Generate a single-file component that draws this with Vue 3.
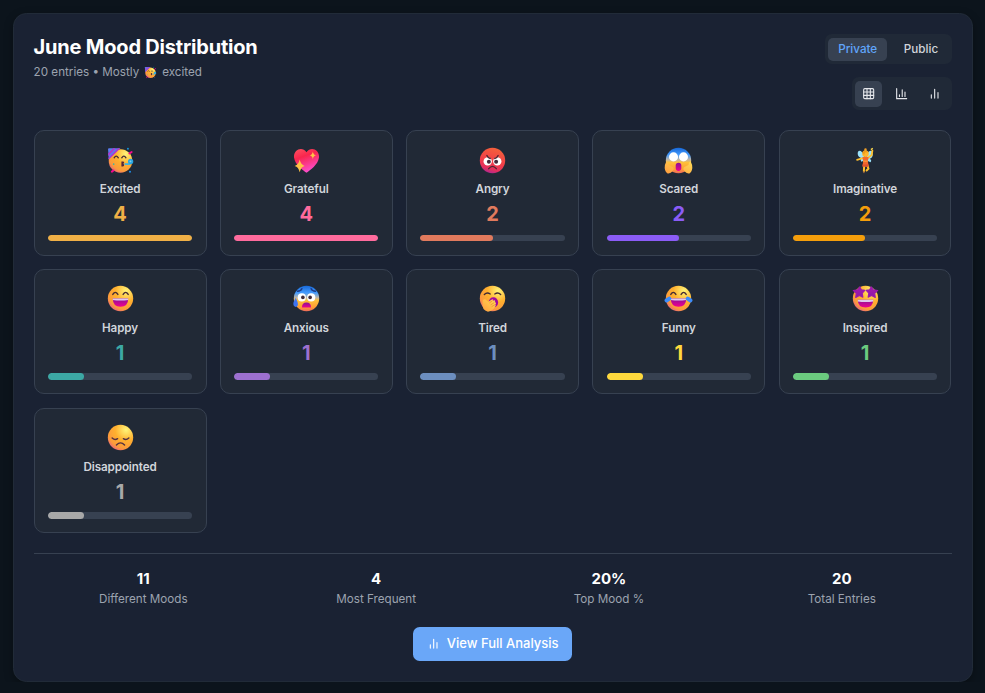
<script setup>
import { ref } from 'vue'

const moods = [
  { name: 'Excited', count: 4, color: '#f0b046', icon: 'party' },
  { name: 'Grateful', count: 4, color: '#ff6b9d', icon: 'heart' },
  { name: 'Angry', count: 2, color: '#e17a5d', icon: 'angry' },
  { name: 'Scared', count: 2, color: '#8b5cf6', icon: 'scream' },
  { name: 'Imaginative', count: 2, color: '#f59e0b', icon: 'fairy' },
  { name: 'Happy', count: 1, color: '#3ca8a4', icon: 'grin' },
  { name: 'Anxious', count: 1, color: '#9d70d0', icon: 'anxious' },
  { name: 'Tired', count: 1, color: '#6c8ebf', icon: 'yawn' },
  { name: 'Funny', count: 1, color: '#ffd93d', icon: 'joy' },
  { name: 'Inspired', count: 1, color: '#6bcb7f', icon: 'star' },
  { name: 'Disappointed', count: 1, color: '#a8a8a8', icon: 'sad' },
]
const top = Math.max(...moods.map((m) => m.count))
const stats = [
  { value: '11', label: 'Different Moods' },
  { value: '4', label: 'Most Frequent' },
  { value: '20%', label: 'Top Mood %' },
  { value: '20', label: 'Total Entries' },
]
const scope = ref('Private')
const view = ref('grid')
</script>

<template>
  <svg class="defs" width="0" height="0" aria-hidden="true">
    <defs>
      <radialGradient id="face" cx="0.72" cy="0.2" r="0.95">
        <stop offset="0" stop-color="#fff478" />
        <stop offset="0.45" stop-color="#ffb02e" />
        <stop offset="0.78" stop-color="#fb9a3c" />
        <stop offset="1" stop-color="#e45090" />
      </radialGradient>
      <linearGradient id="blueFace" x1="0" y1="0" x2="0" y2="1">
        <stop offset="0" stop-color="#1768d8" />
        <stop offset="0.28" stop-color="#459cff" />
        <stop offset="0.48" stop-color="#c7b7a0" />
        <stop offset="0.58" stop-color="#ffc13a" />
        <stop offset="0.85" stop-color="#ff9b35" />
        <stop offset="1" stop-color="#ee6a5c" />
      </linearGradient>
      <linearGradient id="redFace" x1="0.7" y1="0" x2="0.4" y2="1">
        <stop offset="0" stop-color="#f4623a" />
        <stop offset="0.6" stop-color="#f03c4a" />
        <stop offset="0.85" stop-color="#e22e60" />
        <stop offset="1" stop-color="#b0288e" />
      </linearGradient>
      <linearGradient id="heartFill" x1="0" y1="0" x2="0.4" y2="1">
        <stop offset="0" stop-color="#ff5260" />
        <stop offset="0.4" stop-color="#f8264e" />
        <stop offset="1" stop-color="#fc4cc8" />
      </linearGradient>
      <linearGradient id="mouth" x1="0" y1="0" x2="0" y2="1">
        <stop offset="0" stop-color="#8a1295" />
        <stop offset="1" stop-color="#f00090" />
      </linearGradient>
      <linearGradient id="hand" x1="1" y1="0" x2="0" y2="1">
        <stop offset="0" stop-color="#ffdc57" />
        <stop offset="1" stop-color="#ff9c3d" />
      </linearGradient>
      <linearGradient id="starFill" x1="0" y1="0" x2="0" y2="1">
        <stop offset="0" stop-color="#a819ad" />
        <stop offset="1" stop-color="#8c17a8" />
      </linearGradient>
    </defs>

    <symbol id="party" viewBox="0 0 32 32">
      <circle cx="16" cy="16.5" r="13" fill="url(#face)" />
      <path d="M2.300 3.500Q2.300 2.500 3.300 2.500H15.500L3 14.500Z" fill="#5a7cf0" />
      <path d="M2.300 8.300L8 2.500H10.700L2.400 11ZM3 15l-.5-1.800L13.300 2.500h2.700Z" fill="#b138cc" />
      <path d="M9 13q2.300-3.600 4.600 0M17.400 13q2.300-3.600 4.600 0" fill="none" stroke="#452c35" stroke-width="1.500" stroke-linecap="round" />
      <path d="M17 17h2.200q1.800.8 0 2.600 1.800 2-.4 3H17z" fill="#57283a" />
      <path d="M20.500 20h6.500" stroke="#3fb2e0" stroke-width="2" />
      <circle cx="27.200" cy="17" r="2.900" fill="#2ca6df" />
      <circle cx="27" cy="17" r="1" fill="#7fd2f0" />
      <path d="M25.800 8.300L28.300 6.600M6.500 28.300l1.700-1.300" stroke="#f6088e" stroke-width="2.200" stroke-linecap="round" />
      <circle cx="24.200" cy="3" r="1" fill="#149de4" />
      <circle cx="8.500" cy="20" r=".9" fill="#36b5ad" />
      <circle cx="26.500" cy="28.500" r="1.100" fill="#1e8de8" />
    </symbol>

    <symbol id="heart" viewBox="0 0 32 32">
      <path d="M16 7C21-.7 31 4.500 29.700 13 28.700 20.500 20 27 16 29.500 12 27 3.300 20.500 2.300 13 1 4.500 11-.7 16 7Z" fill="url(#heartFill)" />
      <path d="M23 6q.7 4 3.500 4.300-2.800.5-3.500 4.200-.7-3.700-3.500-4.200Q22.300 10 23 6ZM8.500 15q1.200 6 5.500 7-4.300 1-5.500 7-1.200-6-5.500-7 4.300-1 5.500-7Z" fill="#ffc247" />
    </symbol>

    <symbol id="angry" viewBox="0 0 32 32">
      <circle cx="16" cy="16" r="14" fill="url(#redFace)" />
      <circle cx="10.700" cy="17" r="4.600" fill="#fff" />
      <circle cx="21.300" cy="17" r="4.600" fill="#fff" />
      <circle cx="12" cy="17.300" r="2.200" fill="#432a3b" />
      <circle cx="20" cy="17.300" r="2.200" fill="#432a3b" />
      <path d="M9.800 10.500q1.200 2.800 3.700 3.300M22.200 10.500q-1.200 2.800-3.700 3.300M11.800 25q4.200-5 8.400 0" fill="none" stroke="#4b2634" stroke-width="1.500" stroke-linecap="round" />
    </symbol>

    <symbol id="scream" viewBox="0 0 32 32">
      <circle cx="16" cy="16" r="14" fill="url(#blueFace)" />
      <circle cx="10.500" cy="12" r="5" fill="#fff" />
      <circle cx="21.500" cy="12" r="5" fill="#fff" />
      <rect x="12.900" y="18.500" width="6.200" height="9" rx="3.100" fill="url(#mouth)" />
      <path d="M2.500 17q2 0 2.500 4 2 1 5 2.500 1.800 2-.4 4Q7 31 3.500 30 0 27 1 21ZM29.500 17q-2 0-2.500 4-2 1-5 2.500-1.800 2 .4 4 2.600 3.500 6.100 2.500 3.500-3 2.500-9Z" fill="url(#hand)" />
    </symbol>

    <symbol id="fairy" viewBox="0 0 32 32">
      <path d="M15 12C12 3 6.500 4 7.500 9.500q.8 3.500 5 4-3 1.500-1 4l4-2ZM17 12C18 4 24 3 24 9q0 4-3.500 5 3 1.500 1 4l-4-2Z" fill="#9be1fb" />
      <path d="M13 13.500l-6.300 1.800M19 13l3.800-3 .8-5" fill="none" stroke="#ffc02d" stroke-width="2" stroke-linecap="round" />
      <path d="M12.600 12h6.800l-.8 5 1 5.500h-7l.8-5.500Z" fill="#f2672c" />
      <path d="M13.300 16.700h5.200" stroke="#f9a13a" stroke-width="1.300" />
      <path d="M14.500 22l-.3 6M18.300 22l.9 3-2 2" fill="none" stroke="#ffc02d" stroke-width="2.200" stroke-linecap="round" />
      <path d="M12.500 20.500h7.200l-.8 2.500h-6z" fill="#dd5230" />
      <circle cx="16" cy="8.500" r="3.600" fill="#ffb52d" />
      <path d="M12.800 8q.5-4 4.500-3l2.200 2-4 .3-1 2.700Z" fill="#ee9d1c" />
      <circle cx="16" cy="4" r="1.400" fill="#f0a028" />
      <path d="M22 4l2-1.500" stroke="#ffda50" stroke-width="1.500" />
      <path d="M14.200 28l-.2 2" stroke="#8b5b40" stroke-width="1.500" />
    </symbol>

    <symbol id="laugh" viewBox="0 0 32 32">
      <circle cx="16" cy="16" r="14" fill="url(#face)" />
      <path d="M7.500 11.500q2.800-4.500 5.600 0M18.900 11.500q2.800-4.500 5.600 0" fill="none" stroke="#452c35" stroke-width="1.600" stroke-linecap="round" />
      <path d="M7.500 16h17q0 9-8.500 9T7.500 16Z" fill="url(#mouth)" />
      <path d="M7.500 16h17v1.700q-8.500 1.200-17 0Z" fill="#dfc7ed" />
    </symbol>
    <symbol id="grin" viewBox="0 0 32 32"><use href="#laugh" /></symbol>
    <symbol id="joy" viewBox="0 0 32 32">
      <use href="#laugh" />
      <path d="M5.800 16.200l-3 2M26.200 16.200l3 2" stroke="#3c8cfb" stroke-width="4.400" stroke-linecap="round" />
    </symbol>

    <symbol id="anxious" viewBox="0 0 32 32">
      <circle cx="16" cy="16" r="14" fill="url(#blueFace)" />
      <path d="M6 8q4 0 5-3M26 8q-4 0-5-3" fill="none" stroke="#1d3984" stroke-width="1.400" stroke-linecap="round" />
      <circle cx="10.800" cy="14.800" r="4.500" fill="#fff" />
      <circle cx="21.200" cy="14.800" r="4.500" fill="#fff" />
      <circle cx="12" cy="14.800" r="2" fill="#402a38" />
      <circle cx="20" cy="14.800" r="2" fill="#402a38" />
      <path d="M11 26q0-5.500 5-5.500t5 5.500Z" fill="url(#mouth)" />
      <path d="M4 15.500q3.500 5.500 2.200 8.500Q4 26.500 2 24 .3 21.500 4 15.500Z" fill="#3d73f2" />
    </symbol>

    <symbol id="yawn" viewBox="0 0 32 32">
      <circle cx="16" cy="16" r="14" fill="url(#face)" />
      <path d="M7 11.500q3-3 6.500-.5M18.500 11q3.500-2.500 6.500.5" fill="none" stroke="#452c35" stroke-width="1.500" stroke-linecap="round" />
      <ellipse cx="17" cy="20.300" rx="5.200" ry="5.600" fill="#a00a9f" />
      <path d="M5.300 18q2-2.300 4 0l2 1.500 4.500-2.800q1.800.2.500 1.800l2-.7q1.500.6.200 2l1 .6q1 1.100-.4 2l.6 1Q17 30 11 30.500 4 29 5 21Z" fill="url(#hand)" />
      <path d="M12.500 21l3.500-2.500M14 23l4-2.500M15 25l4-2.300" stroke="#e98e2e" stroke-width=".8" />
    </symbol>

    <symbol id="star" viewBox="0 0 32 32">
      <circle cx="16" cy="16" r="14" fill="url(#face)" />
      <path d="M7.500 17.500h17q0 8.500-8.500 8.500t-8.500-8.500Z" fill="url(#mouth)" />
      <path d="M7.500 17.500h17v1.700q-8.500 1.200-17 0Z" fill="#dfc7ed" />
      <path d="M9.700 3l1.700 3.400 3.800.6-2.800 3.100.7 4.400-3.800-1.800-4.100 2.100.6-4.600-3.300-3.100 4.900-.8ZM22.300 3l-1.700 3.400-3.800.6 2.800 3.100-.7 4.400 3.800-1.800 4.100 2.100-.6-4.600 3.300-3.100-4.900-.8Z" fill="url(#starFill)" stroke="#9a18ad" stroke-width="1.200" stroke-linejoin="round" />
    </symbol>

    <symbol id="sad" viewBox="0 0 32 32">
      <circle cx="16" cy="16" r="14" fill="url(#face)" />
      <path d="M6.800 16.600q3 2.800 6 .7M25.200 16.600q-3 2.800-6 .7M11.500 24.300q4.500-4.700 9 0" fill="none" stroke="#543141" stroke-width="1.600" stroke-linecap="round" />
    </symbol>

    <symbol id="i-grid" viewBox="0 0 24 24"><rect x="3" y="3" width="18" height="18" rx="2" /><path d="M3 9h18M3 15h18M9 3v18M15 3v18" /></symbol>
    <symbol id="i-chart" viewBox="0 0 24 24"><path d="M3 3v18h18M18 17V9M13 17V5M8 17v-3" /></symbol>
    <symbol id="i-bars" viewBox="0 0 24 24"><path d="M18 20V10M12 20V4M6 20v-6" /></symbol>
  </svg>

  <main class="panel">
    <header class="head">
      <div>
        <h1>June Mood Distribution</h1>
        <p class="sub">20 entries • Mostly <svg class="mini"><use href="#party" /></svg> excited</p>
      </div>
      <div class="controls">
        <div class="toggle">
          <button v-for="s in ['Private', 'Public']" :key="s" :class="{ active: scope === s }" @click="scope = s">{{ s }}</button>
        </div>
        <div class="toggle views">
          <button v-for="v in ['grid', 'chart', 'bars']" :key="v" :class="{ active: view === v }" @click="view = v">
            <svg class="icon"><use :href="'#i-' + v" /></svg>
          </button>
        </div>
      </div>
    </header>

    <section class="grid">
      <article v-for="m in moods" :key="m.name" class="mood">
        <div class="emoji"><svg><use :href="'#' + m.icon" /></svg></div>
        <div class="name">{{ m.name }}</div>
        <div class="count" :style="{ color: m.color }">{{ m.count }}</div>
        <div class="track"><div class="fill" :style="{ width: (m.count / top) * 100 + '%', background: m.color }"></div></div>
      </article>
    </section>

    <section class="stats">
      <div v-for="s in stats" :key="s.label">
        <div class="value">{{ s.value }}</div>
        <div class="label">{{ s.label }}</div>
      </div>
    </section>

    <div class="action">
      <button class="primary"><svg class="icon"><use href="#i-bars" /></svg>View Full Analysis</button>
    </div>
  </main>
</template>

<style>
html,
body {
  background: #0c141c;
}
body {
  margin: 0;
  overflow: hidden;
}
</style>

<style scoped>
.defs {
  position: absolute;
}
.panel {
  box-sizing: border-box;
  height: 669px;
  margin: 13.3px 12.5px 0 12.6px;
  padding: 20px;
  border: 1px solid #212b38;
  border-radius: 13.3px;
  background: #1a2233;
  box-shadow: 0 3px 10px rgba(0, 0, 0, 0.3);
  color: #fff;
  font-family: Inter, sans-serif;
}
.head {
  display: flex;
  justify-content: space-between;
  height: 96px;
}
h1 {
  margin: 0;
  font-size: 20px;
  line-height: 26.67px;
  font-weight: 700;
  letter-spacing: -0.2px;
}
.sub {
  display: flex;
  align-items: center;
  gap: 5px;
  margin: 3.3px 0 0;
  font-size: 11.67px;
  line-height: 16.67px;
  color: #9ca3af;
}
.mini {
  width: 13px;
  height: 13px;
}
.controls {
  display: flex;
  flex-direction: column;
  align-items: flex-end;
  gap: 13px;
}
.toggle {
  display: flex;
  gap: 6.67px;
  padding: 3.33px;
  border-radius: 6.67px;
  background: #202937;
}
button {
  border: 0;
  background: none;
  font-family: inherit;
}
.toggle button {
  display: flex;
  align-items: center;
  padding: 0 10px;
  height: 23.4px;
  border-radius: 5px;
  color: #d1d5db;
  font-size: 11.67px;
  font-weight: 500;
}
.toggle .active {
  background: #374151;
  color: #60a5fa;
}
.views button,
.views .active {
  height: 26.3px;
  padding: 0 6.67px;
  color: #e5e7eb;
}
.icon {
  width: 13.33px;
  height: 13.33px;
  fill: none;
  stroke: currentColor;
  stroke-width: 2;
  stroke-linecap: round;
  stroke-linejoin: round;
}
.grid {
  display: grid;
  grid-template-columns: repeat(5, 1fr);
  gap: 13.33px;
}
.mood {
  padding: 13.33px;
  border: 1px solid #374151;
  border-radius: 10px;
  background: #212936;
  text-align: center;
}
.emoji {
  display: flex;
  justify-content: center;
  align-items: center;
  box-sizing: border-box;
  height: 30px;
  padding-top: 1px;
  margin-bottom: 6.67px;
}
.emoji svg {
  flex: none;
  width: 29px;
  height: 29px;
}
.name {
  margin-bottom: 3.33px;
  color: #d1d5db;
  font-size: 11.67px;
  line-height: 16.67px;
  font-weight: 600;
  letter-spacing: -0.12px;
}
.count {
  margin-bottom: 6.67px;
  font-size: 20px;
  line-height: 26.67px;
  font-weight: 700;
}
.track {
  height: 6.67px;
  overflow: hidden;
  border-radius: 4px;
  background: #374151;
}
.fill {
  height: 100%;
  border-radius: 4px;
}
.stats {
  display: grid;
  grid-template-columns: repeat(4, 1fr);
  gap: 13.33px;
  margin-top: 20px;
  padding-top: 13.33px;
  border-top: 1px solid #374151;
  text-align: center;
}
.value {
  font-size: 15px;
  line-height: 23.33px;
  font-weight: 700;
}
.label {
  color: #9ca3af;
  font-size: 11.67px;
  line-height: 16.67px;
}
.action {
  display: flex;
  justify-content: center;
  margin-top: 20px;
}
.primary {
  display: flex;
  align-items: center;
  gap: 7px;
  height: 33.5px;
  padding: 0 13.33px 1px;
  border-radius: 6.67px;
  background: #6aa7f8;
  color: #fff;
  font-size: 13px;
  font-weight: 500;
}
</style>
